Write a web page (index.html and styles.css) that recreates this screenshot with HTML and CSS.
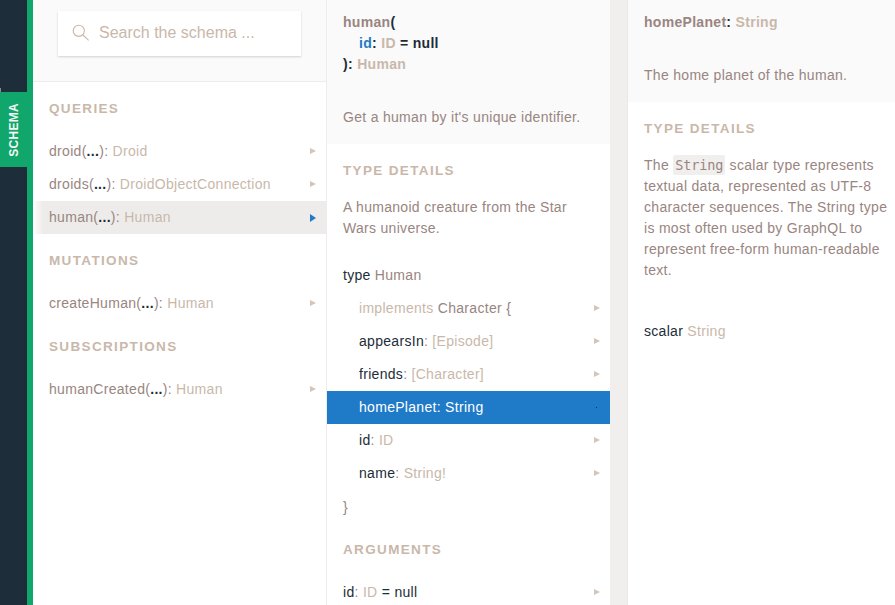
FILE: index.html
```html
<!DOCTYPE html>
<html lang="en">
<head>
<meta charset="utf-8">
<title>Schema</title>
<link rel="stylesheet" href="styles.css">
</head>
<body>
<div class="app">
  <div class="side"><div class="side-mark"></div><div class="tab"><span>SCHEMA</span></div></div>
  <div class="edge"></div>
  <section class="col root">
    <div class="search-area">
      <div class="search">
        <svg width="18" height="18" viewBox="0 0 18 18" fill="none" stroke="#c9b8aa" stroke-width="1.1"><circle cx="6.8" cy="6.8" r="5.6"/><path d="M11 11l5.6 5.4"/></svg>
        <span>Search the schema ...</span>
      </div>
    </div>
    <h2>QUERIES</h2>
    <div class="row"><span>droid(<b>...</b>): <i>Droid</i></span><em></em></div>
    <div class="row"><span>droids(<b>...</b>): <i>DroidObjectConnection</i></span><em></em></div>
    <div class="row open"><span>human(<b>...</b>): <i>Human</i></span><em></em></div>
    <h2>MUTATIONS</h2>
    <div class="row"><span>createHuman(<b>...</b>): <i>Human</i></span><em></em></div>
    <h2>SUBSCRIPTIONS</h2>
    <div class="row"><span>humanCreated(<b>...</b>): <i>Human</i></span><em></em></div>
  </section>
  <section class="col detail">
    <header>
      <div class="sign">human<u>(</u><div class="arg"><s>id</s><u>:</u> <i>ID</i> <u>= null</u></div><u>):</u> <i>Human</i></div>
      <p>Get a human by it's unique identifier.</p>
    </header>
    <h2>TYPE DETAILS</h2>
    <p class="desc">A humanoid creature from the Star Wars universe.</p>
    <div class="row"><span><u>type</u> Human</span></div>
    <div class="row field"><span><i>implements</i> Character {</span><em></em></div>
    <div class="row field"><span><u>appearsIn</u>: <i>[Episode]</i></span><em></em></div>
    <div class="row field"><span><u>friends</u>: <i>[Character]</i></span><em></em></div>
    <div class="row field active"><span>homePlanet: String</span><em></em></div>
    <div class="row field"><span><u>id</u>: <i>ID</i></span><em></em></div>
    <div class="row field"><span><u>name</u>: <i>String!</i></span><em></em></div>
    <div class="row close"><span>}</span></div>
    <h2>ARGUMENTS</h2>
    <div class="row"><span><u>id</u>: <i>ID</i> <u>=</u> <u>null</u></span><em></em></div>
  </section>
  <div class="gutter"></div>
  <section class="col last">
    <header>
      <div class="sign">homePlanet<u>:</u> <i>String</i></div>
      <p>The home planet of the human.</p>
    </header>
    <h2>TYPE DETAILS</h2>
    <p class="desc scalar">The <code>String</code> scalar type represents textual data, represented as UTF-8 character sequences. The String type is most often used by GraphQL to represent free-form human-readable text.</p>
    <div class="row"><span><u>scalar</u> <i>String</i></span></div>
  </section>
</div>
</body>
</html>
```
FILE: styles.css
```css
* { box-sizing: border-box; }
body { margin: 0; background: #fff; }
.app {
  display: flex;
  height: 605px;
  overflow: hidden;
  font: 14px/21px "Liberation Sans", Arial, sans-serif;
  letter-spacing: .3px;
  color: #998581;
}
i, em, u, s { font-style: normal; text-decoration: none; }
i { color: #c9b8aa; }
u { color: #1c2d38; }
s { color: #1f7ac8; }
.side { width: 27px; background: #1d2d39; flex: none; }
.side-mark { width: 1px; height: 4px; margin-top: 88px; background: #998581; }
.tab {
  height: 75px;
  background: #11a66c;
  display: flex;
  align-items: center;
  justify-content: center;
}
.tab span {
  writing-mode: vertical-rl;
  transform: rotate(180deg);
  color: #f4f7f5;
  font-size: 12px;
  font-weight: bold;
  line-height: 14px;
}
.edge { width: 6px; background: #11a66c; flex: none; }
.col { flex: none; background: #fff; }
.root { width: 294px; border-right: 1px solid #eeedec; }
.detail { width: 283px; }
.gutter { width: 18px; flex: none; background: #f1efed; border-right: 1px solid #eae8e7; }
.last { width: 267px; }
.search-area {
  height: 82px;
  padding: 11px 25px 0 25px;
  background: #fafafa;
  border-bottom: 1px solid #ececec;
}
.search {
  width: 243px;
  height: 45px;
  padding: 0 0 2px 14px;
  display: flex;
  align-items: center;
  gap: 9px;
  background: #fff;
  box-shadow: 0 1px 2px rgba(0, 0, 0, .16);
  color: #c9b8aa;
  font-size: 16px;
  letter-spacing: 0;
}
h2 {
  margin: 0;
  padding: 16px;
  color: #c9b8aa;
  font-size: 13.5px;
  line-height: 21px;
  font-weight: bold;
  letter-spacing: 1.35px;
}
.row {
  height: 33px;
  padding: 0 10px 0 16px;
  display: flex;
  align-items: center;
  justify-content: space-between;
  white-space: nowrap;
}
.row b { color: #1c2d38; }
.row em {
  margin-bottom: 2px;
  border-left: 6px solid #d3c5ba;
  border-top: 3px solid transparent;
  border-bottom: 3px solid transparent;
}
.open { background: linear-gradient(90deg, #fff 0, #eeecea 10px); }
.open em { margin-bottom: 0; border-left-color: #1f7ac8; border-top-width: 4px; border-bottom-width: 4px; }
.field { padding-left: 32px; }
.close { padding-top: 2px; }
.active { background: #1f7ac8; color: #fff; }
.active em { width: 1px; height: 1px; margin: 0 3px 0 0; border: 0; background: #1c2d38; }
header { background: #fafafa; padding: 12px 16px 0; height: 144px; }
.last header { height: 102px; }
.sign { font-weight: bold; }
.arg { padding-left: 16px; }
p { margin: 32px 0 0; white-space: nowrap; }
.desc { margin: 0 8px 20px 16px; white-space: normal; }
.desc.scalar { margin: 0 4px 34px 16px; }
code {
  font: 13.5px/18px "DejaVu Sans Mono", monospace;
  background: #f1efed;
  border-radius: 2px;
  padding: 2px;
  letter-spacing: -.1px;
}
```
